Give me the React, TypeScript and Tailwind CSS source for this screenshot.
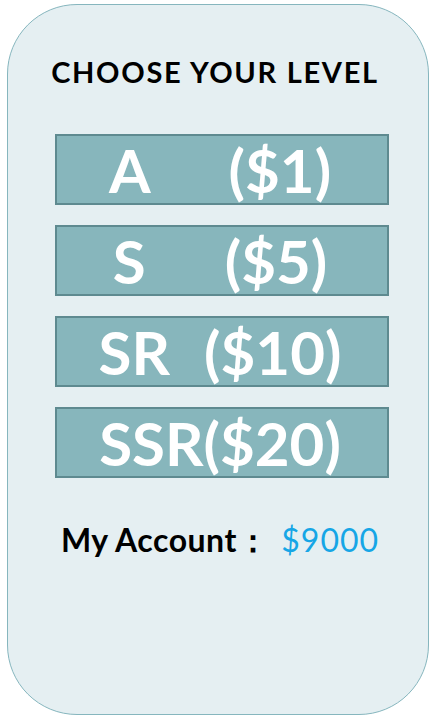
import React from "react";

const rows: { label: string; price: string; gap: string }[] = [
  { label: "A", price: "($1)", gap: "gap-[78px]" },
  { label: "S", price: "($5)", gap: "gap-[79px]" },
  { label: "SR", price: "($10)", gap: "gap-[34px]" },
  { label: "SSR", price: "($20)", gap: "gap-0" },
];

export default function App() {
  return (
    <div className="w-[439px] h-[724px] bg-white pt-[4px] pl-[7px]" style={{ fontFamily: "Lato, 'Open Sans', sans-serif" }}>
      <div className="w-[422px] h-[711px] rounded-[70px] border border-[#86b6be] bg-[#e5eff2] flex flex-col items-center pt-[49px]">
        <h1 className="text-[29px] leading-[36px] font-bold text-black text-center tracking-[1.7px] mr-[6px]">CHOOSE YOUR LEVEL</h1>
        <div className="mt-[44px] ml-[8px] flex flex-col gap-[20px]">
          {rows.map((r) => (
            <div
              key={r.label}
              className={`w-[334px] h-[71px] border-2 border-[#5e8a90] bg-[#87b6bc] flex items-center justify-center pr-[4px] ${r.gap}`}
            >
              <span className="text-[60px] leading-none font-bold text-white">{r.label}</span>
              <span className="text-[60px] leading-none font-bold text-white">{r.price}</span>
            </div>
          ))}
        </div>
        <div className="mt-[44px] ml-[4px] flex items-baseline">
          <span className="text-[32px] leading-[36px] font-bold text-black tracking-[0.5px]">My Account：</span>
          <span className="ml-[12px] text-[32px] leading-[36px] text-[#16a6e6] tracking-[1px]">$9000</span>
        </div>
      </div>
    </div>
  );
}
